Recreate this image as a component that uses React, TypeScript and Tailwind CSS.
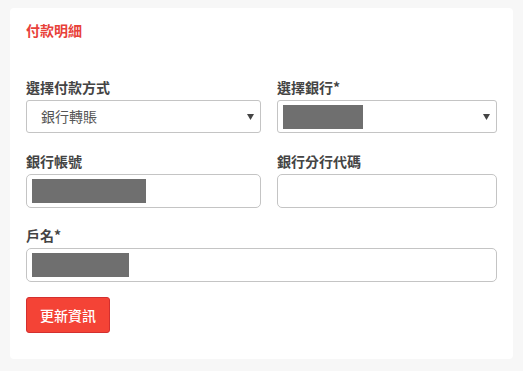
import React from 'react';

const font = { fontFamily: '"Noto Sans CJK TC", "Noto Sans", sans-serif' };

function Label({ children }: { children: React.ReactNode }) {
  return <div className="text-[14px] font-semibold text-[#444] leading-[20px] mb-[3px]">{children}</div>;
}

function Redacted({ w }: { w: string }) {
  return <div className={`h-[24px] bg-[#6f6f6f] ${w}`}></div>;
}

function Caret() {
  return (
    <svg width="7" height="6" viewBox="0 0 7 6" className="shrink-0">
      <path d="M0 0 H7 L3.5 6 Z" fill="#444" />
    </svg>
  );
}

export default function App() {
  return (
    <div className="w-[523px] h-[371px] bg-[#f7f7f7] pt-[8px] px-[10px]" style={font}>
      <div className="bg-white rounded-[4px] h-[351px] pt-[12px] px-[16px]">
        {/* Title */}
        <div className="text-[14px] font-semibold text-[#e8413a] leading-[20px]">付款明細</div>

        {/* Row 1 */}
        <div className="grid grid-cols-[235px_220px] gap-x-[16px] mt-[37px]">
          <div>
            <Label>選擇付款方式</Label>
            <div className="h-[33px] border border-[#c4c4c4] rounded-[3px] flex items-center justify-between pl-[14px] pr-[6px]">
              <span className="text-[14px] text-[#555]">銀行轉賬</span>
              <Caret />
            </div>
          </div>
          <div>
            <Label>選擇銀行*</Label>
            <div className="h-[33px] border border-[#c4c4c4] rounded-[3px] flex items-center justify-between pl-[5px] pr-[6px]">
              <Redacted w="w-[80px]" />
              <Caret />
            </div>
          </div>
        </div>

        {/* Row 2 */}
        <div className="grid grid-cols-[235px_220px] gap-x-[16px] mt-[18px]">
          <div>
            <Label>銀行帳號</Label>
            <div className="h-[34px] border border-[#c4c4c4] rounded-[5px] flex items-center pl-[5px]">
              <Redacted w="w-[114px]" />
            </div>
          </div>
          <div>
            <Label>銀行分行代碼</Label>
            <div className="h-[34px] border border-[#c4c4c4] rounded-[5px]"></div>
          </div>
        </div>

        {/* Row 3 */}
        <div className="mt-[17px] w-[471px]">
          <Label>戶名*</Label>
          <div className="h-[34px] border border-[#c4c4c4] rounded-[5px] flex items-center pl-[5px]">
            <Redacted w="w-[97px]" />
          </div>
        </div>

        <button className="mt-[15px] h-[36px] w-[84px] bg-[#f44336] border border-[#d32f2f] rounded-[3px] text-white text-[14px] font-medium">
          更新資訊
        </button>
      </div>
    </div>
  );
}
